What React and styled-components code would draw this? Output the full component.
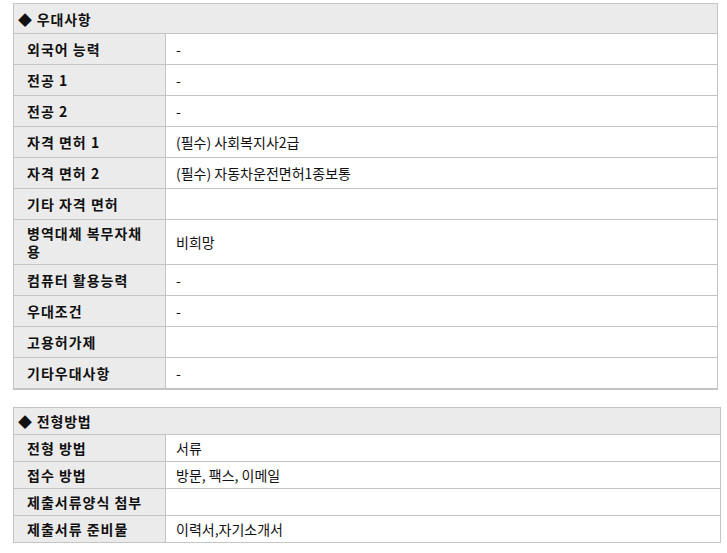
import React from "react";
import styled, { createGlobalStyle } from "styled-components";

const Global = createGlobalStyle`
  html, body { margin: 0; padding: 0; background: #fff; }
  body { font-family: "Noto Sans CJK KR", "Noto Sans", sans-serif; font-size: 14px; color: #111; }
`;

const Page = styled.div`
  display: flex;
  flex-direction: column;
  gap: 17px;
  padding: 3px 0 0 13px;
`;

const Table = styled.div`
  width: ${(p) => p.$width}px;
  box-sizing: border-box;
  border: 1px solid #c4c4c4;
  border-bottom-width: ${(p) => p.$bottom}px;
`;

const Header = styled.div`
  background: #ebebeb;
  border-bottom: 1px solid #c4c4c4;
  height: ${(p) => p.$h}px;
  display: flex;
  align-items: center;
  padding-left: 4px;
  font-weight: 700;
  letter-spacing: 0.8px;
  gap: 4px;
`;

const Row = styled.div`
  display: grid;
  grid-template-columns: 152px 1fr;
  min-height: ${(p) => p.$h}px;
  border-bottom: 1px solid #c4c4c4;
  &:last-child { border-bottom: none; }
`;

const Label = styled.div`
  box-sizing: border-box;
  background: #ebebeb;
  border-right: 1px solid #c4c4c4;
  padding: 4px 14px 4px 13px;
  display: flex;
  align-items: center;
  font-weight: 700;
  letter-spacing: 1px;
  line-height: 18px;
`;

const Value = styled.div`
  padding: 0 10px;
  display: flex;
  align-items: center;
  line-height: 18px;
`;

const Section = ({ title, rows, width, rowH, headH, bottom }) => (
  <Table $width={width} $bottom={bottom}>
    <Header $h={headH}>
      <span>◆</span>
      <span>{title}</span>
    </Header>
    {rows.map(([l, v]) => (
      <Row key={l} $h={rowH}>
        <Label>{l}</Label>
        <Value>{v}</Value>
      </Row>
    ))}
  </Table>
);

const prefs = [
  ["외국어 능력", "-"],
  ["전공 1", "-"],
  ["전공 2", "-"],
  ["자격 면허 1", "(필수) 사회복지사2급"],
  ["자격 면허 2", "(필수) 자동차운전면허1종보통"],
  ["기타 자격 면허", ""],
  ["병역대체 복무자채용", "비희망"],
  ["컴퓨터 활용능력", "-"],
  ["우대조건", "-"],
  ["고용허가제", ""],
  ["기타우대사항", "-"],
];

const method = [
  ["전형 방법", "서류"],
  ["접수 방법", "방문, 팩스, 이메일"],
  ["제출서류양식 첨부", ""],
  ["제출서류 준비물", "이력서,자기소개서"],
];

export default function App() {
  return (
    <>
      <Global />
      <Page>
        <Section title="우대사항" rows={prefs} width={705} rowH={30} headH={29} bottom={2} />
        <Section title="전형방법" rows={method} width={708} rowH={26} headH={26} bottom={1} />
      </Page>
    </>
  );
}
